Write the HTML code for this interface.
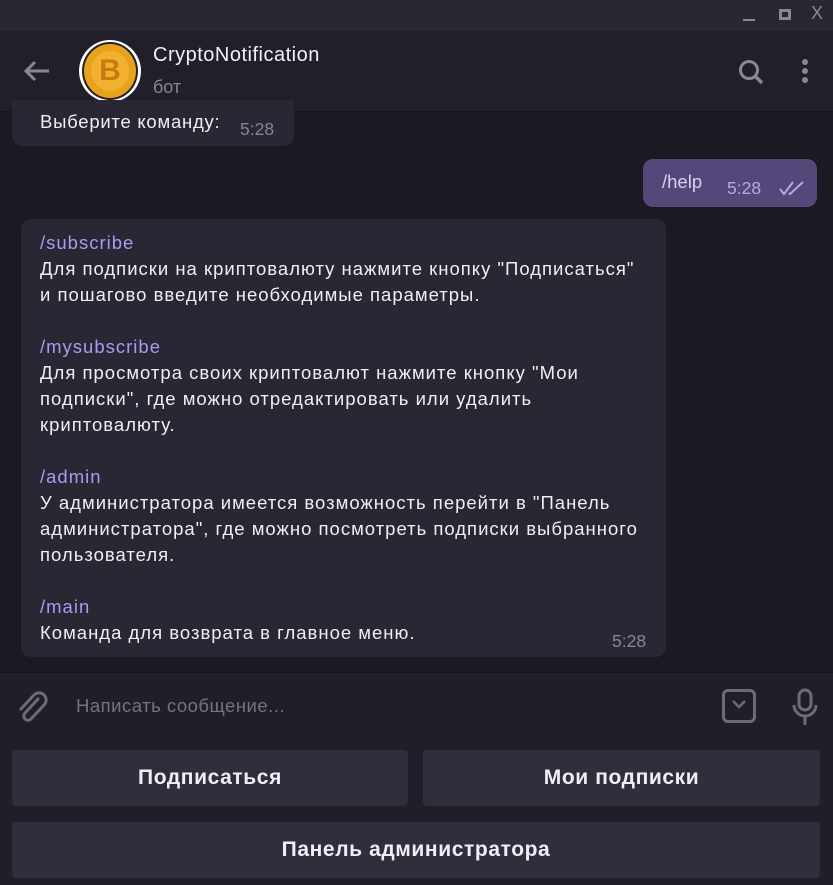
<!DOCTYPE html>
<html><head><meta charset="utf-8"><style>
*{margin:0;padding:0;box-sizing:border-box}
body{width:833px;height:885px;background:#1b1921;font-family:"Liberation Sans",sans-serif;color:#f0eef5;position:relative;overflow:hidden}
.tb{position:absolute;left:0;top:0;width:833px;height:31px;background:#2a2733}
.hd{position:absolute;left:0;top:31px;width:833px;height:81px;background:#221f2b;border-bottom:1px solid #17151c}
.b{position:absolute;background:#2a2634;border-radius:10px;font-size:18.5px;letter-spacing:1px;line-height:26px;white-space:nowrap}
.t{color:#8a8496;font-size:17.5px}
.l{color:#a99cf0}
.inp{position:absolute;left:0;top:672px;width:833px;height:213px;background:#211e29;border-top:1px solid #17151c}
.btn{position:absolute;background:#322d3d;border-radius:4px;font-size:21px;letter-spacing:0.6px;font-weight:bold;text-align:center;line-height:56px;color:#f0eef5;white-space:nowrap}
</style></head><body>
<div class="tb">
<div style="position:absolute;left:743px;top:19px;width:12px;height:2px;background:#8a8696"></div>
<div style="position:absolute;left:779px;top:9px;width:12px;height:11px;border:3px solid #8a8696"></div>
<div style="position:absolute;left:811px;top:3px;font-size:18px;color:#8a8696">X</div>
</div>
<div class="hd">
<svg style="position:absolute;left:22px;top:28px" width="30" height="24" viewBox="0 0 30 24"><path d="M27 12H4M13 3L4 12l9 9" stroke="#8a8696" stroke-width="3" fill="none"/></svg>
<div style="position:absolute;left:79px;top:9px;width:62px;height:62px;border-radius:50%;background:#fff"></div>
<div style="position:absolute;left:82px;top:11px;width:56px;height:58px;border-radius:50%;background:#e8a21c;border:2px solid #222"></div>
<div style="position:absolute;left:91px;top:20px;width:38px;height:40px;border-radius:50%;background:#f2b230;color:#c77b10;font-weight:bold;font-size:30px;text-align:center;line-height:40px">B</div>
<div style="position:absolute;left:153px;top:13px;font-size:20px;letter-spacing:0.5px;color:#f3f1f7">CryptoNotification</div>
<div style="position:absolute;left:153px;top:46px;font-size:18px;color:#8a8696">бот</div>
<svg style="position:absolute;left:737px;top:27px" width="30" height="30" viewBox="0 0 30 30"><circle cx="12" cy="12" r="8.5" stroke="#8a8696" stroke-width="3" fill="none"/><path d="M18 18l7 7" stroke="#8a8696" stroke-width="3.5"/></svg>
<div style="position:absolute;left:802px;top:28px;width:6px;height:6px;border-radius:50%;background:#8a8696;box-shadow:0 9px 0 #8a8696,0 18px 0 #8a8696"></div>
</div>
<div class="b" style="left:12px;top:100px;width:282px;height:46px;border-top-left-radius:0;border-top-right-radius:0"></div>
<div style="position:absolute;left:40px;top:111px;font-size:18.5px;letter-spacing:0.75px;white-space:nowrap">Выберите команду:</div>
<div class="t" style="position:absolute;left:240px;top:119px">5:28</div>
<div class="b" style="left:643px;top:159px;width:174px;height:48px;background:#54487a"></div>
<div style="position:absolute;left:662px;top:171px;font-size:18.5px;color:#d7cff5">/help</div>
<div style="position:absolute;left:727px;top:178px;font-size:17.5px;color:#b6abdc">5:28</div>
<svg style="position:absolute;left:778px;top:180px" width="28" height="16" viewBox="0 0 28 16"><path d="M2 9l4 5L15 2M11 13l1 1L25 2" stroke="#b6abdc" stroke-width="2" fill="none"/></svg>
<div class="b" style="left:21px;top:219px;width:645px;height:438px;padding:11px 0 0 19px">
<div class="l">/subscribe</div>
<div>Для подписки на криптовалюту нажмите кнопку "Подписаться"</div>
<div>и пошагово введите необходимые параметры.</div>
<div>&nbsp;</div>
<div class="l">/mysubscribe</div>
<div>Для просмотра своих криптовалют нажмите кнопку "Мои</div>
<div>подписки", где можно отредактировать или удалить</div>
<div>криптовалюту.</div>
<div>&nbsp;</div>
<div class="l">/admin</div>
<div>У администратора имеется возможность перейти в "Панель</div>
<div>администратора", где можно посмотреть подписки выбранного</div>
<div>пользователя.</div>
<div>&nbsp;</div>
<div class="l">/main</div>
<div>Команда для возврата в главное меню.</div>
<div class="t" style="position:absolute;left:591px;top:409px;letter-spacing:0">5:28</div>
</div>
<div class="inp">
<svg style="position:absolute;left:16px;top:18px" width="34" height="36" viewBox="0 0 34 36"><path d="M22 8L9 22a4 4 0 0 0 6 6L28 14a7 7 0 0 0-10-10L5 18" stroke="#6f6a7a" stroke-width="3" fill="none" stroke-linecap="round"/></svg>
<div style="position:absolute;left:76px;top:22px;font-size:18.5px;letter-spacing:0.5px;color:#77727f;white-space:nowrap">Написать сообщение...</div>
<div style="position:absolute;left:722px;top:16px;width:34px;height:34px;border:3px solid #6f6a7a;border-radius:6px"></div>
<svg style="position:absolute;left:729px;top:24px" width="20" height="14"><path d="M4 4l6 6 6-6" stroke="#6f6a7a" stroke-width="2.5" fill="none"/></svg>
<svg style="position:absolute;left:789px;top:14px" width="32" height="40" viewBox="0 0 32 40"><rect x="10" y="3" width="12" height="20" rx="6" stroke="#6f6a7a" stroke-width="3" fill="none"/><path d="M5 18a11 11 0 0 0 22 0M16 29v9" stroke="#6f6a7a" stroke-width="3" fill="none"/></svg>
</div>
<div class="btn" style="left:12px;top:750px;width:396px">Подписаться</div>
<div class="btn" style="left:423px;top:750px;width:397px">Мои подписки</div>
<div class="btn" style="left:12px;top:822px;width:808px">Панель администратора</div>
</body></html>
